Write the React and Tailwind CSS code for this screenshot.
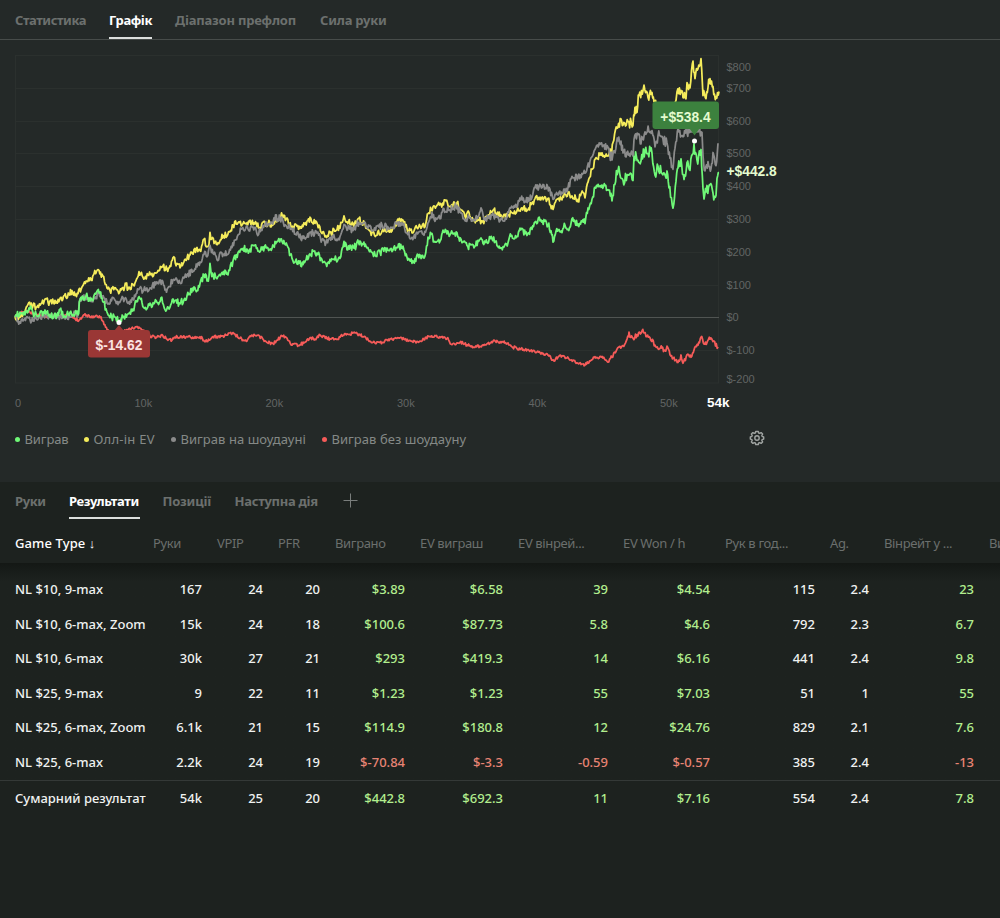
import React, { useState } from 'react';

const CHART = { left: 15, right: 719, top: 55, bottom: 383, zero: 317.5 };

const series = [
  {
    name: 'Виграв без шоудауну',
    color: '#f65b59',
    noise: 1.7,
    seed: 11,
    points: '15,317 20,313 28,312 37,315 50,316 68,316 73,318 79,320 85,314 90,317 97,316 101,317 104,325 108,330 117,334 127,330 133,328 139,327 143,331 150,336 157,337 162,335 167,339 172,340 175,337 183,337 200,337 207,342 213,337 223,336 233,333 240,338 246,341 250,336 258,335 265,341 273,344 282,336 287,338 292,345 300,345 310,338 315,339 320,335 330,339 337,339 343,335 355,333 365,337 370,341 380,343 390,339 400,338 413,342 420,341 430,336 447,338 452,345 460,342 467,345 475,347 487,344 493,341 508,343 512,347 525,350 537,352 548,355 554,361 558,357 563,356 577,363 585,365 595,357 603,358 608,362 612,357 617,349 623,346 627,339 628.5,337 629,332 630,337 633,338 642,331 650,338 655,345 665,350 667,346 670,355 678,362 681,355 683,363 687,355 691,357 694,350 698,345 701,337 704,344 710,339 713,342 718,347'
  },
  {
    name: 'Олл-ін EV',
    color: '#f5ec5b',
    noise: 3.8,
    seed: 23,
    points: '15,317 20,318 28,305 37,307 45,299 48,302 62,300 64,295 66,298 72,291 78,294 82,287 87,281 92,280 94,273 99,270 102,275 107,288 110,291 113,286 118,291 123,288 126,284 128,289 135,282 139,272 143,278 148,276 155,272 162,266 167,269 170,266 173,258 180,268 187,258 190,255 194,250 200,250 204,240 207,247 209,244 210,232 211,240 218,242 222,235 227,236 233,226 238,222 242,226 247,223 254,223 260,227 265,223 272,224 276,220 280,218 281.5,213 283,217 287,218 291,228 297,226 303,227 307,222 310,218 315,224 319,225 325,237 330,233 337,229 343,221 344,215 345,220 347,222 353,224 359,219 365,224 372,233 377,235 383,229 392,231 397,222 403,221 407,229 412,233 417,227 425,226 428,213 433,207 441,205 445,200 450,206 457,203 461,210 465,217 469,213 473,219 483,221 488,218 493,210 500,216 508,215 512,212 517,211 522,207 528,209 535,199 540,197 548,199 553,209 557,200 562,200 565,194 572,196 578,200 583,193 585,197 588,182 592,170 596,158 602,153 607,157 611,152 613,142 617,128 621,119 623,125 628,121 633,125 635,107 637,112 639,95 644,86 648,98 652,93 654,102 662,118 670,120 676,100 677,91 681,90 683,98 686,98 687,83 690,88 693,61 695,78 698,68 701,58 703,95 706,98 708,88 710,78 713,87 716,97 719,92'
  },
  {
    name: 'Виграв на шоудауні',
    color: '#8b8b8b',
    noise: 3.7,
    seed: 37,
    points: '15,317 18,321 23,321 27,317 30,320 37,319 43,316 50,317 57,317 70,317 75,313 78,314 80,298 87,297 92,301 99,293 104,299 110,303 113,298 118,304 123,298 128,303 133,300 139,289 143,291 150,287 157,283 162,281 165,290 168,288 173,280 180,283 187,275 194,270 200,262 204,254 207,256 210,246 213,253 217,259 221,253 228,255 232,248 235,240 242,228 248,229 253,227 257,233 262,230 265,224 272,223 274,218 280,218 285,225 292,229 297,233 303,239 310,233 317,233 322,240 326,243 330,238 340,237 344,224 347,231 349,227 353,231 359,222 367,227 373,230 382,225 390,229 397,224 403,224 407,233 412,237 420,232 424,235 428,223 432,213 435,221 440,218 443,209 450,210 456,206 460,212 463,218 473,219 478,217 481,208 484,220 492,215 500,220 507,217 510,207 515,208 520,198 525,201 532,197 535,188 543,185 550,190 553,200 555,194 563,193 568,188 572,177 578,178 585,173 590,162 595,150 600,144 608,147 612,160 615,152 618,140 621,142 623,153 630,157 633,156 634,140 638,134 641,144 645,132 652,131 655,146 658,135 662,137 667,143 670,158 673,170 675,148 678,128 683,137 687,132 690,128 702,132 703,155 705,171 708,162 711,168 713,153 716,166 718,143'
  },
  {
    name: 'Виграв',
    color: '#6ff877',
    noise: 4.1,
    seed: 53,
    points: '15,317 20,313 25,315 29,307 33,313 38,317 45,310 50,317 57,315 60,310 65,317 70,312 75,314 78,315 80,300 86,296 90,301 93,300 95,293 100,292 102,297 106,309 110,317 115,317 119,321 123,317 128,313 133,309 139,296 142,302 147,309 150,304 157,303 161,298 165,310 170,308 173,299 180,304 187,296 194,287 197,291 200,283 204,275 207,280 209,277 210,264 211,273 217,279 222,273 228,274 233,261 238,253 243,248 250,250 254,245 258,251 267,248 272,248 278,240 283,243 288,248 292,258 297,263 303,265 310,253 317,253 321,258 326,264 330,260 340,258 343,247 344,241 347,249 354,248 360,241 367,247 372,253 380,253 383,248 392,251 397,247 403,246 407,257 412,263 418,255 425,256 428,238 432,233 434,242 441,240 443,231 450,235 457,232 462,243 467,246 474,248 481,238 483,244 492,238 497,245 503,247 508,243 511,235 517,237 520,229 527,235 532,230 535,222 540,220 548,225 551,231 553,242 556,232 562,233 565,225 568,229 572,219 578,224 583,220 585,223 588,208 592,200 595,187 602,185 608,190 611,194 612,200 614,185 618,170 623,181 628,174 633,180 634,156 641,162 645,150 652,153 655,176 658,167 662,173 667,172 669,188 673,208 676,182 678,168 681,159 684,180 687,162 690,170 694,144 697,161 701,149 703,188 704,198 710,184 713,194 716,195 717,178 719,173'
  }
];

const legend = [
  { name: 'Виграв', dot: 'bg-[#6ff877]', style: 'w-[69px] tracking-[-0.1px]' },
  { name: 'Олл-ін EV', dot: 'bg-[#f5ec5b]', style: 'w-[87px] tracking-[0.25px]' },
  { name: 'Виграв на шоудауні', dot: 'bg-[#8b8b8b]', style: 'w-[151px] tracking-[0.05px]' },
  { name: 'Виграв без шоудауну', dot: 'bg-[#f65b59]', style: 'tracking-[0.05px]' }
];

const yLabels = [
  ['$800', 67], ['$700', 88], ['$600', 121], ['$500', 153], ['$400', 186], ['$300', 219],
  ['$200', 252], ['$100', 285], ['$0', 317], ['$-100', 350], ['$-200', 379]
];

const xLabels = [['0', 15], ['10k', 134.5], ['20k', 265.5], ['30k', 397], ['40k', 528.5], ['50k', 660]];

const columns = [
  'Руки', 'VPIP', 'PFR', 'Виграно', 'EV виграш', 'EV вінрей...', 'EV Won / h', 'Рук в год...', 'Ag.', 'Вінрейт у ...', 'Виграно'
];

const rows = [
  ['NL $10, 9-max', '167', '24', '20', '$3.89', '$6.58', '39', '$4.54', '115', '2.4', '23'],
  ['NL $10, 6-max, Zoom', '15k', '24', '18', '$100.6', '$87.73', '5.8', '$4.6', '792', '2.3', '6.7'],
  ['NL $10, 6-max', '30k', '27', '21', '$293', '$419.3', '14', '$6.16', '441', '2.4', '9.8'],
  ['NL $25, 9-max', '9', '22', '11', '$1.23', '$1.23', '55', '$7.03', '51', '1', '55'],
  ['NL $25, 6-max, Zoom', '6.1k', '21', '15', '$114.9', '$180.8', '12', '$24.76', '829', '2.1', '7.6'],
  ['NL $25, 6-max', '2.2k', '24', '19', '$-70.84', '$-3.3', '-0.59', '$-0.57', '385', '2.4', '-13']
];

const total = ['Сумарний результат', '54k', '25', '20', '$442.8', '$692.3', '11', '$7.16', '554', '2.4', '7.8'];

const moneyColumns = [4, 5, 6, 7, 10];

const gridCols = 'grid w-[1094px] grid-cols-[138px_64px_61px_57px_85px_98px_105px_102px_105px_54px_105px_105px]';

// Walks between the anchor points in sub-pixel steps and adds some jitter
const buildPath = ({ points, noise, seed }) => {
  const anchors = points.split(' ').map((p) => p.split(',').map(Number));
  let state = seed;
  const random = () => {
    state = (state * 16807) % 2147483647;
    return state / 2147483647 - 0.5;
  };
  for (let i = 0; i < 10; i++) random();

  let path = `M${anchors[0][0]} ${anchors[0][1]}`;
  for (let i = 1; i < anchors.length; i++) {
    const [x0, y0] = anchors[i - 1];
    const [x1, y1] = anchors[i];
    const steps = Math.max(1, Math.round((x1 - x0) / 0.8));
    for (let s = 1; s <= steps; s++) {
      const t = s / steps;
      const x = x0 + (x1 - x0) * t;
      const spread = s === steps ? noise * 0.5 : noise * (x > 610 ? 3 : 1.8);
      const y = y0 + (y1 - y0) * t + random() * spread;
      path += `L${x.toFixed(1)} ${y.toFixed(1)}`;
    }
  }
  return path;
};

const Chart = () => {
  const gridLines = [55.5, 88.5, 121.5, 153.5, 186.5, 219.5, 252.5, 285.5, 350.5, 383];

  return (
    <svg width="800" height="375" viewBox="0 40 800 375" className="block font-['Liberation_Sans',Arial,sans-serif]">
      <g stroke="#2b302e" strokeWidth="1">
        {gridLines.map((y) => (
          <line key={y} x1={CHART.left} x2={CHART.right} y1={y} y2={y} />
        ))}
        <line x1="15.5" x2="15.5" y1={CHART.top} y2={CHART.bottom} />
        <line x1="718.5" x2="718.5" y1={CHART.top} y2={CHART.bottom} />
      </g>
      <line x1={CHART.left} x2={CHART.right} y1={CHART.zero} y2={CHART.zero} stroke="#505452" />

      {series.map((item) => (
        <path key={item.name} d={buildPath(item)} fill="none" stroke={item.color} strokeWidth="1.75" strokeLinejoin="round" />
      ))}

      <g fill="#626564" fontSize="11">
        {yLabels.map(([text, y]) => (
          <text key={text} x="726.5" y={y + 4}>{text}</text>
        ))}
        {xLabels.map(([text, x]) => (
          <text key={text} x={x} y="406.5">{text}</text>
        ))}
      </g>
      <text x="707" y="406.5" fontSize="13.5" fontWeight="bold" fill="#ffffff">54k</text>
      <text x="726.5" y="176" fontSize="13.8" fontWeight="bold" fill="#e4fbcf">+$442.8</text>

      <path d="M114 331l5-6 5 6z" fill="#9a3735" />
      <rect x="88" y="330" width="62" height="27.5" rx="3" fill="#9a3735" />
      <text x="119" y="350" fontSize="13.8" fontWeight="bold" fill="#fbe4e2" textAnchor="middle">$-14.62</text>
      <circle cx="119" cy="322.5" r="2.5" fill="#ffffff" />

      <path d="M689.5 128.5l5 7 5-7z" fill="#3c813e" />
      <rect x="652.5" y="101.5" width="66.5" height="27.5" rx="3" fill="#3c813e" />
      <text x="685.5" y="121.5" fontSize="13.8" fontWeight="bold" fill="#e4fbcf" textAnchor="middle">+$538.4</text>
      <circle cx="694.5" cy="141" r="2.5" fill="#ffffff" />
    </svg>
  );
};

const Gear = () => (
  <svg width="16" height="16" viewBox="0 0 16 16" fill="none" stroke="#a0a4a2" strokeWidth="1.4" strokeLinejoin="round">
    <path d="M6.7 1.5h2.6l.4 1.5 1 .4 1.4-.8 1.5 1.5-.8 1.4.4 1 1.5.4v2.200l-1.5.4-.4 1 .8 1.4-1.5 1.5-1.4-.8-1 .4-.4 1.500H6.7l-.4-1.500-1-.4-1.4.8-1.5-1.5.8-1.4-.4-1-1.500-.4V6.900l1.500-.4.4-1-.8-1.4 1.5-1.5 1.4.8 1-.4z" />
    <circle cx="8" cy="8" r="2.2" />
  </svg>
);

const Tabs = ({ items, active, onSelect }) => (
  <>
    {items.map((item) => (
      <button
        key={item.name}
        type="button"
        onClick={() => onSelect(item.name)}
        className={`flex h-full shrink-0 items-center whitespace-nowrap border-b-2 pt-[5px] text-[13px] font-bold ${item.style} ${
          active === item.name ? 'border-[#dcdfdd] text-white' : 'border-transparent text-[#6c706e]'
        }`}
      >
        {item.name}
      </button>
    ))}
  </>
);

const chartTabs = [
  { name: 'Статистика', style: 'w-[71px] tracking-[-0.45px]' },
  { name: 'Графік', style: 'w-[43px] tracking-[-0.4px]' },
  { name: 'Діапазон префлоп', style: 'w-[122px] tracking-[-0.2px]' },
  { name: 'Сила руки', style: 'w-[68px] tracking-[-0.2px]' }
];

const tableTabs = [
  { name: 'Руки', style: 'w-[31px] tracking-[-0.4px]' },
  { name: 'Результати', style: 'w-[70.5px] tracking-[-0.35px]' },
  { name: 'Позиції', style: 'w-[49px] tracking-[-0.2px]' },
  { name: 'Наступна дія', style: 'w-[84px] tracking-[-0.3px]' }
];

const cellColor = (value, index) => {
  if (!moneyColumns.includes(index)) return 'text-[#f0f2f1]';
  return value.includes('-') ? 'text-[#e88474]' : 'text-[#b2ee8e]';
};

const Row = ({ cells, className }) => (
  <div className={`${gridCols} items-center font-medium ${className}`}>
    {cells.map((value, index) => (
      <div
        key={index}
        className={`whitespace-nowrap ${index === 0 ? 'text-left' : 'pr-[15px] text-right'} ${cellColor(value, index)}`}
      >
        {value}
      </div>
    ))}
  </div>
);

const App = () => {
  const [chartTab, setChartTab] = useState('Графік');
  const [tableTab, setTableTab] = useState('Результати');

  return (
    <div className="flex h-[918px] w-[1000px] flex-col overflow-hidden bg-[#242928] font-['Noto_Sans','Open_Sans',sans-serif] text-[13px]">
      <nav className="flex h-10 shrink-0 gap-[23px] border-b border-[#474c4a] px-[15px]">
        <Tabs items={chartTabs} active={chartTab} onSelect={setChartTab} />
      </nav>

      <section className="h-[442px] shrink-0">
        <Chart />
        <div className="flex h-12 w-[765px] items-center justify-between pl-[14.5px]">
          <div className="flex pt-px text-[#858987]">
            {legend.map((item) => (
              <div key={item.name} className={`flex items-center gap-[5px] ${item.style}`}>
                <span className={`size-[5px] rounded-full ${item.dot}`}></span>
                <span className="whitespace-nowrap">{item.name}</span>
              </div>
            ))}
          </div>
          <button type="button" className="pb-[2px]">
            <Gear />
          </button>
        </div>
      </section>

      <section className="flex grow flex-col bg-[#1d221f]">
        <nav className="flex h-[37px] shrink-0 gap-[23px] px-[15px]">
          <Tabs items={tableTabs} active={tableTab} onSelect={setTableTab} />
          <button type="button" className="flex h-full items-center pb-px pl-px">
            <svg width="15" height="15" viewBox="0 0 15 15" stroke="#7a7e7c" strokeWidth="1">
              <path d="M7.5 0.5v14M0.5 7.5h14" />
            </svg>
          </button>
        </nav>

        <div className={`${gridCols} h-[44px] shrink-0 items-center pl-[15px] pt-[5px] tracking-[-0.35px] text-[#6b6f6d]`}>
          <div className="font-medium tracking-[0.1px] text-white">Game Type ↓</div>
          {columns.map((name, index) => (
            <div key={index} className="whitespace-nowrap">{name}</div>
          ))}
        </div>

        <div className="bg-linear-to-b from-[#141815] to-[#1d221f] to-[18px] pt-[9.5px] pl-[15px]">
          {rows.map((cells, index) => (
            <Row key={index} cells={cells} className="h-[34.5px]" />
          ))}
        </div>
        <div className="border-t border-[#343937] pl-[15px]">
          <Row cells={total} className="h-[36px]" />
        </div>
      </section>
    </div>
  );
};

export default App;
